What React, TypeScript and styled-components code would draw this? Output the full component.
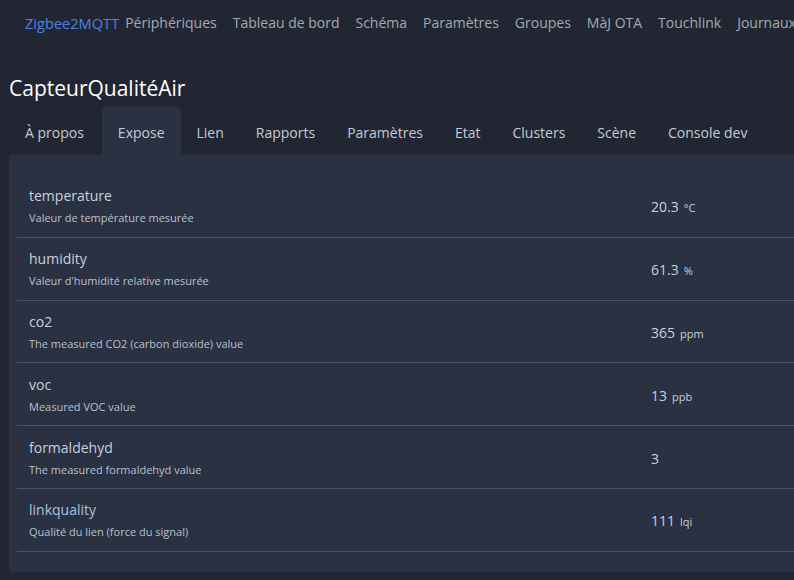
import React from "react";
import styled, { createGlobalStyle } from "styled-components";

const GlobalStyle = createGlobalStyle`
  html, body {
    margin: 0;
    padding: 0;
    background: #222633;
    overflow: hidden;
  }
  body {
    font-family: "Open Sans", "Noto Sans", sans-serif;
  }
`;

type Feature = {
  name: string;
  description: string;
  value: string;
  unit?: string;
  link?: boolean;
};

const features: Feature[] = [
  { name: "temperature", description: "Valeur de température mesurée", value: "20.3", unit: "°C" },
  { name: "humidity", description: "Valeur d'humidité relative mesurée", value: "61.3", unit: "%" },
  { name: "co2", description: "The measured CO2 (carbon dioxide) value", value: "365", unit: "ppm" },
  { name: "voc", description: "Measured VOC value", value: "13", unit: "ppb" },
  { name: "formaldehyd", description: "The measured formaldehyd value", value: "3" },
  { name: "linkquality", description: "Qualité du lien (force du signal)", value: "111", unit: "lqi", link: true },
];

const navItems = [
  "Périphériques",
  "Tableau de bord",
  "Schéma",
  "Paramètres",
  "Groupes",
  "MàJ OTA",
  "Touchlink",
  "Journaux",
];

const tabs = [
  "À propos",
  "Expose",
  "Lien",
  "Rapports",
  "Paramètres",
  "Etat",
  "Clusters",
  "Scène",
  "Console dev",
];

export default function App() {
  return (
    <Page>
      <GlobalStyle />
      <NavBar>
        <Brand>Zigbee2MQTT</Brand>
        {navItems.map((item) => (
          <NavLink key={item}>{item}</NavLink>
        ))}
      </NavBar>
      <Title>CapteurQualitéAir</Title>
      <TabBar>
        {tabs.map((tab) => (
          <Tab key={tab} $active={tab === "Expose"}>
            {tab}
          </Tab>
        ))}
      </TabBar>
      <Card>
        <Table>
          {features.map((f) => (
            <Row key={f.name}>
              <NameCell>
                <FeatureName $link={f.link}>{f.name}</FeatureName>
                <Description>{f.description}</Description>
              </NameCell>
              <ValueCell>
                {f.value}
                {f.unit && <Unit>{f.unit}</Unit>}
              </ValueCell>
            </Row>
          ))}
        </Table>
      </Card>
    </Page>
  );
}

const Page = styled.div`
  min-height: 580px;
  overflow: hidden;
  background: #222633;
`;

const NavBar = styled.nav`
  display: flex;
  align-items: center;
  height: 45px;
  padding-left: 25px;
  font-size: 14px;
  white-space: nowrap;
  overflow: hidden;
`;

const Brand = styled.span`
  color: #4a82e0;
  font-size: 14.6px;
  margin-right: -2px;
`;

const NavLink = styled.span`
  color: #a2a9b5;
  padding: 0 8px;
`;

const Title = styled.h1`
  margin: 0;
  padding: 28px 9px 0;
  height: 34px;
  font-size: 21px;
  font-weight: 400;
  color: #ffffff;
  line-height: 30px;
`;

const TabBar = styled.div`
  display: flex;
  padding-left: 9px;
  height: 48px;
  white-space: nowrap;
  overflow: hidden;
`;

const Tab = styled.div<{ $active?: boolean }>`
  display: flex;
  align-items: center;
  padding: 2px 16px 0;
  font-size: 14px;
  color: #c4cbd6;
  border-radius: 4px 4px 0 0;
  background: ${(p) => (p.$active ? "#2a3142" : "transparent")};

  &:first-child {
    padding-right: 18px;
  }
`;

const Card = styled.div`
  margin-left: 9px;
  background: #2a3142;
  border-radius: 0 0 0 4px;
  padding: 20px 0 20px 8px;
`;

const Table = styled.div`
  display: flex;
  flex-direction: column;
`;

const Row = styled.div`
  display: grid;
  grid-template-columns: 622px 1fr;
  box-sizing: border-box;
  height: 62.8px;
  padding-top: 2px;
  border-bottom: 1px solid #4c5262;
`;

const NameCell = styled.div`
  display: flex;
  flex-direction: column;
  justify-content: center;
  padding: 0 12px;
`;

const FeatureName = styled.div<{ $link?: boolean }>`
  font-size: 14px;
  line-height: 20px;
  color: ${(p) => (p.$link ? "#a9c3df" : "#c9d0db")};
`;

const Description = styled.div`
  font-size: 11px;
  line-height: 18px;
  margin-top: 3px;
  color: #b9c0cb;
`;

const ValueCell = styled.div`
  display: flex;
  align-items: center;
  padding: 0 12px;
  font-size: 14px;
  color: #c9d0db;
  white-space: nowrap;
`;

const Unit = styled.span`
  font-size: 11px;
  margin-left: 5px;
  margin-top: 2px;
`;
